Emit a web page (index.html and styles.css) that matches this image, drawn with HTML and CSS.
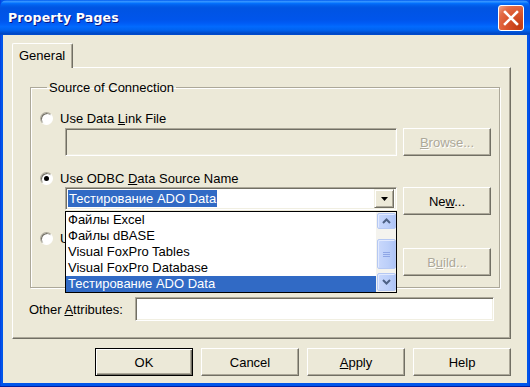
FILE: index.html
```html
<!DOCTYPE html>
<html lang="en">
<head>
    <meta charset="utf-8">
    <title>Property Pages</title>
    <link rel="stylesheet" href="styles.css">
</head>
<body>
    <div class="window">
        <div class="titlebar">
            <span class="title">Property Pages</span>
            <span class="close">
                <svg width="16" height="16" viewBox="0 0 16 16">
                    <path d="M2 2 L14 14 M14 2 L2 14" stroke="#fff" stroke-width="2.6" stroke-linecap="square"/>
                </svg>
            </span>
        </div>
        <div class="client">
            <div class="tabs">
                <div class="tab">General</div>
            </div>
            <div class="panel">
                <fieldset class="group">
                    <legend>Source of Connection</legend>
                    <div class="option"><span class="radio"></span><span>Use Data <u>L</u>ink File</span></div>
                    <div class="row">
                        <div class="field"></div>
                        <button class="btn disabled"><u>B</u>rowse...</button>
                    </div>
                    <div class="option opt2"><span class="radio checked"></span><span>Use ODBC <u>D</u>ata Source Name</span></div>
                    <div class="row combo-row">
                        <div class="combo">
                            <span class="combo-text">Тестирование ADO Data</span>
                            <span class="combo-arrow">
                                <svg width="7" height="4" viewBox="0 0 7 4"><path d="M0 0h7L3.5 4z" fill="#000"/></svg>
                            </span>
                            <!-- open drop-down list -->
                            <div class="dropdown">
                                <ul class="items">
                                    <li>Файлы Excel</li>
                                    <li>Файлы dBASE</li>
                                    <li>Visual FoxPro Tables</li>
                                    <li>Visual FoxPro Database</li>
                                    <li class="selected">Тестирование ADO Data</li>
                                </ul>
                                <div class="scrollbar">
                                    <span class="sb-btn">
                                        <svg width="9" height="6" viewBox="0 0 9 6"><path d="M1 5 L4.5 1.5 L8 5" stroke="#4d6185" stroke-width="2" fill="none"/></svg>
                                    </span>
                                    <span class="sb-thumb">
                                        <svg width="7" height="7" viewBox="0 0 7 7"><path d="M0 1.5h7M0 3.5h7M0 5.5h7" stroke="#8ea6e6" stroke-width="1"/></svg>
                                    </span>
                                    <span class="sb-btn down">
                                        <svg width="9" height="6" viewBox="0 0 9 6"><path d="M1 1 L4.5 4.5 L8 1" stroke="#4d6185" stroke-width="2" fill="none"/></svg>
                                    </span>
                                </div>
                            </div>
                        </div>
                        <button class="btn">Ne<u>w</u>...</button>
                    </div>
                    <div class="option opt3"><span class="radio"></span><span class="hidden-label">U</span></div>
                    <div class="row">
                        <div class="field"></div>
                        <button class="btn disabled">B<u>u</u>ild...</button>
                    </div>
                </fieldset>
                <div class="attr-row">
                    <label>Other <u>A</u>ttributes:</label>
                    <div class="field white"></div>
                </div>
            </div>
            <div class="buttons">
                <button class="btn default">OK</button>
                <button class="btn">Cancel</button>
                <button class="btn"><u>A</u>pply</button>
                <button class="btn">Help</button>
            </div>
        </div>
    </div>
</body>
</html>
```

FILE: styles.css
```css
body {
    margin: 0;
    background-color: #0055ea;
    font-family: "Liberation Sans", Arial, sans-serif;
    font-size: 13px;
    color: #000;
}
.window {
    width: 530px;
    height: 387px;
    display: flex;
    flex-direction: column;
    background: linear-gradient(to right, #0831d9 0, #0055ea 1px, #0055ea 529px, #0831d9 530px);
    border-bottom: 1px solid #001ea0;
    box-sizing: border-box;
}
.titlebar {
    height: 35px;
    flex: none;
    display: flex;
    align-items: center;
    justify-content: space-between;
    padding: 0 6px 0 8px;
    border-radius: 7px 7px 0 0;
    background: linear-gradient(to bottom, #0058ee 0%, #3593ff 4%, #288eff 6%, #127dff 8%, #036ffc 10%, #0262ee 14%, #0057e5 20%, #0054e3 24%, #0055eb 56%, #005bf5 66%, #026afe 76%, #0062ef 86%, #0052d6 92%, #0045c0 97%, #0050d8 100%);
}
.title {
    font-family: "DejaVu Sans", sans-serif;
    font-weight: bold;
    font-size: 12.5px;
    color: #fff;
    text-shadow: 1px 1px #0a1883;
    letter-spacing: 0.2px;
}
.close {
    width: 24px;
    height: 24px;
    margin-top: 1px;
    border: 1px solid #fff;
    border-radius: 3px;
    display: flex;
    align-items: center;
    justify-content: center;
    background: radial-gradient(circle at 85% 85%, #c23b13 0, #d9542c 45%, #e36c47 75%, #f0a58a 100%);
}
.client {
    flex: 1;
    margin: 0 3px 3px 3px;
    background-color: #ece9d8;
    padding: 8px 16px 0 9px;
}
.tabs {
    display: flex;
    height: 24px;
    position: relative;
    z-index: 1;
}
.tab {
    width: 61px;
    height: 25px;
    box-sizing: border-box;
    padding: 4px 0 0 6px;
    background-color: #ece9d8;
    border-top: 1px solid #fff;
    border-left: 1px solid #fff;
    border-right: 1px solid #716f64;
    box-shadow: inset -1px 0 #aca899;
    border-radius: 2px 2px 0 0;
}
.panel {
    height: 272px;
    box-sizing: border-box;
    border: 1px solid;
    border-color: #fff #716f64 #716f64 #fff;
    box-shadow: inset -1px -1px #aca899;
    padding: 12px 10px 0 17px;
}
.group {
    margin: 0;
    height: 208px;
    box-sizing: border-box;
    border: 1px solid #aca899;
    box-shadow: inset 1px 1px #fff, 1px 1px #fff;
    padding: 15px 8px 0 9px;
}
.group legend {
    padding: 0 2px;
    margin-left: 7px;
    line-height: 15px;
}
.option {
    display: flex;
    align-items: center;
    height: 16px;
}
.opt2 {
    margin-top: 14px;
}
.opt3 {
    margin-top: 15px;
}
.radio {
    flex: none;
    position: relative;
    width: 11px;
    height: 11px;
    margin-right: 7px;
    border-radius: 50%;
    background-color: #fff;
    border: 1px solid;
    border-color: #aca899 #fff #fff #aca899;
    box-shadow: inset 1px 1px #716f64;
}
.radio.checked::after {
    content: "";
    position: absolute;
    left: 3px;
    top: 3px;
    width: 5px;
    height: 5px;
    border-radius: 50%;
    background-color: #000;
}
.row {
    display: flex;
    gap: 6px;
    margin: 2px 0 0 25px;
    height: 28px;
}
.combo-row {
    margin-top: 1px;
}
.field {
    flex: 1;
    box-sizing: border-box;
    border: 1px solid;
    border-color: #aca899 #fff #fff #aca899;
    box-shadow: inset 1px 1px #716f64, inset -1px -1px #f1efe2;
}
.field.white {
    background-color: #fff;
}
.btn {
    flex: none;
    width: 88px;
    height: 28px;
    box-sizing: border-box;
    font-family: "Liberation Sans", Arial, sans-serif;
    font-size: 13px;
    color: #000;
    background-color: #ece9d8;
    border: 1px solid;
    border-color: #fff #716f64 #716f64 #fff;
    box-shadow: inset -1px -1px #aca899;
    padding: 0;
}
.btn.disabled {
    color: #aca899;
    text-shadow: 1px 1px #fff;
}
.combo {
    flex: 1;
    position: relative;
    height: 23px;
    box-sizing: border-box;
    background-color: #fff;
    border: 1px solid;
    border-color: #aca899 #fff #fff #aca899;
    box-shadow: inset 1px 1px #716f64, inset -1px -1px #f1efe2;
    display: flex;
    align-items: center;
    padding: 0 2px 0 2px;
}
.combo-text {
    flex: none;
    background-color: #316ac5;
    color: #fff;
    line-height: 17px;
    padding: 0 1px;
}
.combo-arrow {
    margin-left: auto;
    width: 20px;
    height: 19px;
    box-sizing: border-box;
    display: flex;
    align-items: center;
    justify-content: center;
    background-color: #ece9d8;
    border: 1px solid;
    border-color: #f1efe2 #716f64 #716f64 #f1efe2;
    box-shadow: inset 1px 1px #fff, inset -1px -1px #aca899;
}
.dropdown {
    position: absolute;
    left: -1px;
    top: 23px;
    width: 332px;
    height: 82px;
    box-sizing: border-box;
    border: 1px solid #000;
    background-color: #fff;
    display: flex;
    z-index: 2;
}
.items {
    flex: 1;
    list-style: none;
    margin: 0;
    padding: 0;
}
.items li {
    height: 16px;
    line-height: 16px;
    padding-left: 2px;
}
.items li.selected {
    background-color: #316ac5;
    color: #fff;
}
.scrollbar {
    flex: none;
    width: 20px;
    display: flex;
    flex-direction: column;
    background-color: #f4f3ee;
    padding: 1px 0 1px 1px;
    box-sizing: border-box;
}
.sb-btn, .sb-thumb {
    display: flex;
    align-items: center;
    justify-content: center;
    box-sizing: border-box;
    border: 1px solid #b5c8f3;
    border-radius: 2px;
    background: linear-gradient(to right, #c9d8fc, #bccff9 60%, #aec4f7);
    box-shadow: inset 1px 1px #e2eafe;
}
.sb-btn {
    height: 16px;
}
.sb-thumb {
    height: 30px;
    margin-top: 10px;
}
.sb-btn.down {
    margin-top: auto;
    height: 18px;
}
.attr-row {
    display: flex;
    align-items: center;
    margin: 9px 6px 0 -1px;
    height: 24px;
}
.attr-row label {
    flex: 0 0 106px;
}
.attr-row .field {
    height: 24px;
}
.buttons {
    display: flex;
    justify-content: flex-end;
    gap: 8px;
    margin-top: 9px;
}
.buttons .btn {
    width: 98px;
}
.btn.default {
    border: 1px solid #000;
    box-shadow: inset 1px 1px #fff, inset -1px -1px #716f64, inset -2px -2px #aca899;
}
```
